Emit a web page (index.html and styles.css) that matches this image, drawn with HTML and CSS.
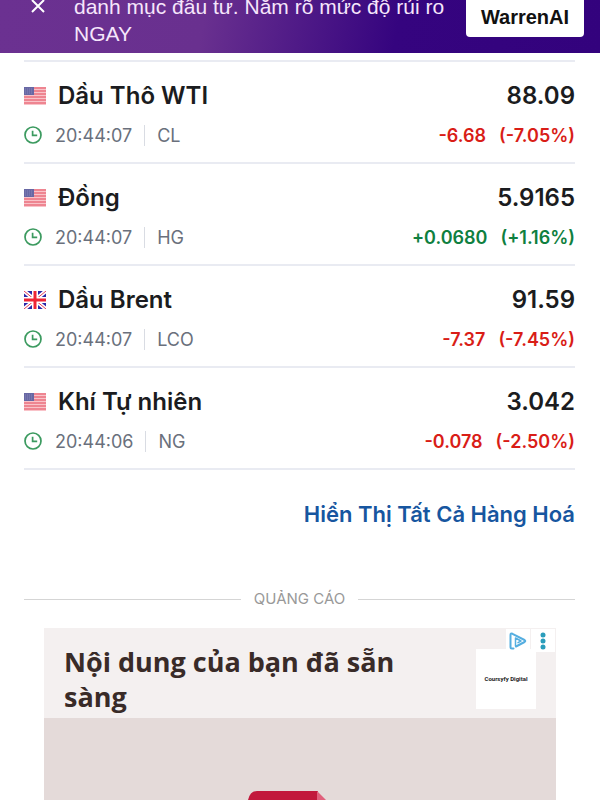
FILE: index.html
```
<!DOCTYPE html>
<html lang="vi">
<head>
 <meta charset="utf-8">
 <title>Hàng Hoá</title>
 <meta name="viewport" content="width=device-width, initial-scale=1">
 <link rel="stylesheet" href="styles.css">
</head>

<body>
<!-- shared icons -->
<svg class="sprite" aria-hidden="true">
  <symbol id="flag-us" viewBox="0 0 22 18">
    <rect width="22" height="18" fill="#f9c3c9"/>
    <path d="M0 1h22M0 4h22M0 7h22M0 10h22M0 13h22M0 16h22" stroke="#ee8591" stroke-width="2"/>
    <rect width="10" height="8" fill="#6868a4"/>
    <path d="M1 2h8M1 4h8M1 6h8" stroke="#8585b8" stroke-width="1" stroke-dasharray="1 1"/>
  </symbol>
  <symbol id="flag-uk" viewBox="0 0 22 18">
    <rect width="22" height="18" rx="1" fill="#2a26a8"/>
    <path d="M0 0l22 18M22 0L0 18" stroke="#fff" stroke-width="4"/>
    <path d="M0 0l22 18M22 0L0 18" stroke="#e8405a" stroke-width="1"/>
    <path d="M11 0v18M0 9h22" stroke="#fff" stroke-width="6"/>
    <path d="M11 0v18M0 9h22" stroke="#ee2436" stroke-width="3"/>
  </symbol>
  <symbol id="clock" viewBox="0 0 18 18">
    <circle cx="9" cy="9" r="8" fill="none" stroke="#3b9a5f" stroke-width="1.7"/>
    <path d="M8.6 4.8v4.6h4.6" fill="none" stroke="#3b9a5f" stroke-width="1.7"/>
  </symbol>
</svg>

<div class="banner">
  <button class="banner-close" type="button" aria-label="Đóng">
    <svg width="16" height="16" viewBox="0 0 16 16"><path d="M2 2l12 12M14 2L2 14" stroke="#fff" stroke-width="2"/></svg>
  </button>
  <p class="banner-text">danh mục đầu tư. Nắm rõ mức độ rủi ro NGAY</p>
  <button class="banner-button" type="button">Hỏi<br>WarrenAI</button>
</div>

<main class="content">
  <table class="quotes">
    <tr>
      <td>
        <div class="name"><svg class="flag"><use href="#flag-us"/></svg>Dầu Thô WTI</div>
        <div class="meta"><svg class="clock"><use href="#clock"/></svg><span>20:44:07</span><span class="symbol">CL</span></div>
      </td>
      <td class="right">
        <div class="price">88.09</div>
        <div class="change down"><span>-6.68</span><span>(-7.05%)</span></div>
      </td>
    </tr>
    <tr>
      <td>
        <div class="name"><svg class="flag"><use href="#flag-us"/></svg>Đồng</div>
        <div class="meta"><svg class="clock"><use href="#clock"/></svg><span>20:44:07</span><span class="symbol">HG</span></div>
      </td>
      <td class="right">
        <div class="price">5.9165</div>
        <div class="change up"><span>+0.0680</span><span>(+1.16%)</span></div>
      </td>
    </tr>
    <tr>
      <td>
        <div class="name"><svg class="flag"><use href="#flag-uk"/></svg>Dầu Brent</div>
        <div class="meta"><svg class="clock"><use href="#clock"/></svg><span>20:44:07</span><span class="symbol">LCO</span></div>
      </td>
      <td class="right">
        <div class="price">91.59</div>
        <div class="change down"><span>-7.37</span><span>(-7.45%)</span></div>
      </td>
    </tr>
    <tr>
      <td>
        <div class="name"><svg class="flag"><use href="#flag-us"/></svg>Khí Tự nhiên</div>
        <div class="meta"><svg class="clock"><use href="#clock"/></svg><span>20:44:06</span><span class="symbol">NG</span></div>
      </td>
      <td class="right">
        <div class="price">3.042</div>
        <div class="change down"><span>-0.078</span><span>(-2.50%)</span></div>
      </td>
    </tr>
  </table>

  <a class="show-all" href="#">Hiển Thị Tất Cả Hàng Hoá</a>

  <div class="ad-label">QUẢNG CÁO</div>

  <div class="ad">
    <div class="ad-header">
      <h2 class="ad-title">Nội dung của bạn đã sẵn sàng</h2>
      <div class="ad-logo">Coursyfy Digital</div>
    </div>
    <div class="ad-image">
      <svg width="80" height="9" viewBox="0 0 80 9">
        <path d="M0 9q2-9 9-9h61v9z" fill="#c2183c"/>
        <path d="M69 0l9 9h-9z" fill="#e0607c"/>
      </svg>
    </div>
    <div class="ad-controls">
      <button type="button" aria-label="AdChoices">
        <svg width="18" height="18" viewBox="0 0 18 18" fill="none" stroke="#55aee0" stroke-linejoin="round" stroke-linecap="round">
          <path d="M4.500 16.500H3q-1.500 0-1.500-1.500V3q0-2 2-1.200L15.500 8q1.500 1 0 2L7 14.500" stroke-width="2"/>
          <path d="M6.500 14V6l5.500 3-3 1.600" stroke-width="1.500"/>
        </svg>
      </button>
      <button type="button" aria-label="Tuỳ chọn">
        <svg width="6" height="18" viewBox="0 0 6 18" fill="#2a9dbb"><circle cx="3" cy="3" r="2.500"/><circle cx="3" cy="9" r="2.500"/><circle cx="3" cy="15" r="2.500"/></svg>
      </button>
    </div>
  </div>
</main>

</body>
</html>
```
FILE: styles.css
```
* {
  box-sizing: border-box;
}

body {
  margin: 0;
  min-height: 100vh;
  display: flex;
  flex-direction: column;
  background: #fff;
  color: #1b1c20;
  font-family: Inter, "Liberation Sans", sans-serif;
}

button {
  border: 0;
  padding: 0;
  cursor: pointer;
}

.sprite {
  position: absolute;
  width: 0;
  height: 0;
}

/* purple bar, its upper part is scrolled away */
.banner {
  display: flex;
  align-items: flex-end;
  height: 53px;
  padding: 0 16px 0 30px;
  overflow: hidden;
  background: linear-gradient(100deg, #6b3191 0%, #69308f 34%, #35047f 66%, #33027d 100%);
  font-family: "Liberation Sans", Arial, sans-serif;
}

.banner-close {
  height: 16px;
  margin-bottom: 39px;
  background: none;
}

.banner-close svg,
.ad-controls svg {
  display: block;
}

.banner-text {
  flex: 1;
  margin: 0 16px 6px 28px;
  color: #f6e6fb;
  font-size: 21px;
  line-height: 27px;
}

.banner-button {
  width: 118px;
  margin-bottom: 16px;
  padding: 7px 0;
  border-radius: 4px;
  background: #fff;
  color: #111;
  font: bold 20px/26px "Liberation Sans", Arial, sans-serif;
}

.content {
  flex: 1;
  display: flex;
  flex-direction: column;
  padding: 7px 25px 0 24px;
}

.quotes {
  width: 100%;
  border-collapse: separate;
  border-spacing: 0;
  border-top: 2px solid #e9ebf2;
}

.quotes td {
  padding: 17px 0 15px;
  border-bottom: 2px solid #e9ebf2;
}

.right {
  text-align: right;
}

.name,
.meta,
.change {
  display: flex;
  align-items: center;
}

.name,
.price {
  height: 34px;
  margin-bottom: 10px;
  font-size: 24px;
  font-weight: 600;
  line-height: 34px;
}

.name {
  gap: 12px;
}

.flag {
  width: 22px;
  height: 18px;
}

.clock {
  width: 18px;
  height: 18px;
  margin-right: 13px;
}

.meta {
  height: 24px;
  color: #6a707c;
  font-size: 18px;
}

.symbol {
  margin-left: 12px;
  padding-left: 12px;
  border-left: 1px solid #d9dce3;
}

.change {
  justify-content: flex-end;
  gap: 13px;
  height: 24px;
  font-size: 18px;
  font-weight: 600;
}

.up {
  color: #0f8040;
}

.down {
  color: #d91d17;
}

.show-all {
  align-self: flex-end;
  margin-top: 27px;
  color: #1756a0;
  font-size: 22px;
  font-weight: 600;
  line-height: 34px;
  text-decoration: none;
}

.ad-label {
  display: flex;
  align-items: center;
  gap: 13px;
  margin-top: 56px;
  color: #999;
  font-size: 15px;
  line-height: 24px;
}

.ad-label::before,
.ad-label::after {
  content: "";
  flex: 1;
  border-top: 1px solid #d5d5d5;
}

.ad {
  position: relative;
  flex: 1;
  display: flex;
  flex-direction: column;
  margin: 17px 19px 0 20px;
}

.ad-header {
  display: flex;
  justify-content: space-between;
  height: 90px;
  padding: 16px 20px 0;
  background: #f4f0f0;
}

.ad-title {
  max-width: 360px;
  margin: 0;
  color: #392b28;
  font: bold 27px/35px "Open Sans", "Noto Sans", sans-serif;
}

.ad-logo {
  display: flex;
  align-items: center;
  justify-content: center;
  width: 60px;
  height: 60px;
  margin-top: 5px;
  background: #fff;
  color: #222;
  font: bold 6px/8px Roboto, "Open Sans", sans-serif;
}

.ad-image {
  flex: 1;
  display: flex;
  align-items: flex-end;
  min-height: 82px;
  padding-left: 204px;
  background: #e4dad9;
}

.ad-controls {
  position: absolute;
  top: 1px;
  right: 1px;
  display: flex;
  gap: 1px;
}

.ad-controls button {
  display: flex;
  align-items: center;
  justify-content: center;
  width: 24px;
  height: 23px;
  background: #fff;
}
```
